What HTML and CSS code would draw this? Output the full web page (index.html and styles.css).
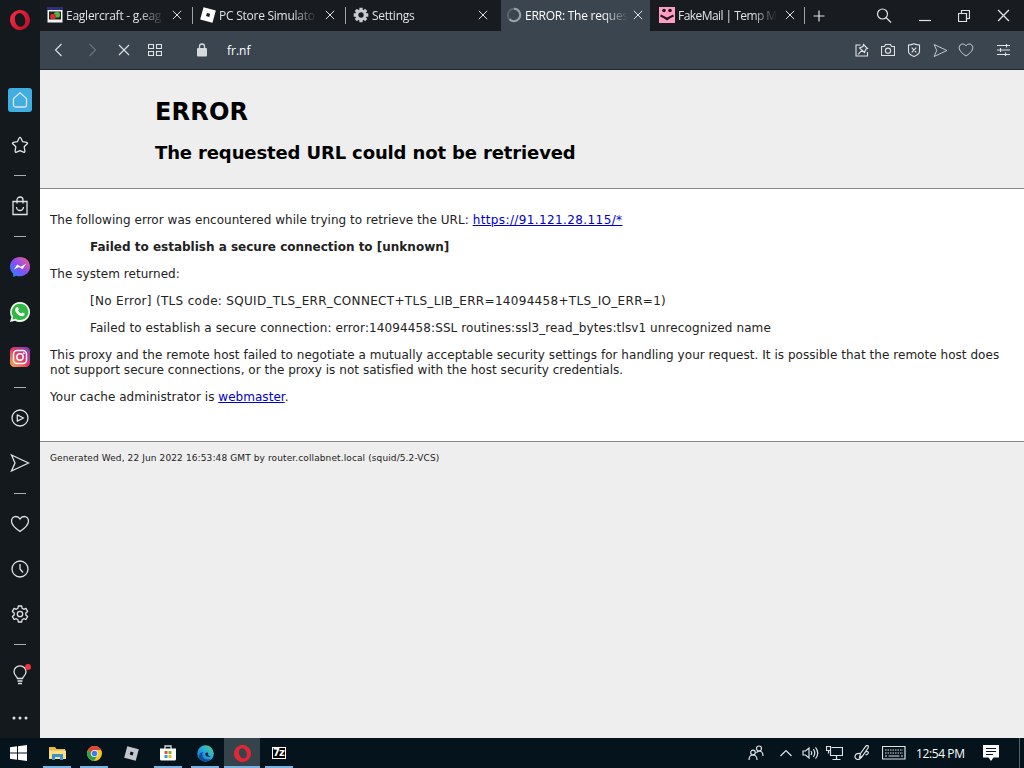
FILE: index.html
```
<!DOCTYPE html>
<html lang="en">
<head>
    <meta charset="utf-8"/>
    <title>ERROR: The requested URL could not be retrieved</title>
    <link rel="stylesheet" href="styles.css">
</head>
<body>
<svg class="defs" width="0" height="0">
    <defs>
        <linearGradient id="opera" x1="0" y1="0" x2="1" y2="1"><stop offset="0" stop-color="#ff2b44"/><stop offset="1" stop-color="#b80d28"/></linearGradient>
        <linearGradient id="messenger" x1="0" y1="1" x2="1" y2="0"><stop offset="0" stop-color="#168bff"/><stop offset=".5" stop-color="#8a4df5"/><stop offset="1" stop-color="#ff6179"/></linearGradient>
        <linearGradient id="insta" x1="0" y1="1" x2="1" y2="0"><stop offset="0" stop-color="#fdb44b"/><stop offset=".5" stop-color="#e23a68"/><stop offset="1" stop-color="#7a3cc8"/></linearGradient>
        <linearGradient id="edge" x1="0" y1="1" x2="1" y2="0"><stop offset="0" stop-color="#1268c4"/><stop offset=".55" stop-color="#27a9e0"/><stop offset="1" stop-color="#5fd668"/></linearGradient>
        <symbol id="x" viewBox="0 0 12 12"><path d="M1 1l10 10M11 1L1 11"/></symbol>
        <symbol id="send" viewBox="0 0 20 20"><path d="M1.500 2L18.500 10 1.500 18 5 10z"/></symbol>
        <symbol id="heart" viewBox="0 0 20 20"><path d="M10 17.500C7 15.500 1.500 11.500 1.500 7c0-2.500 2-4.500 4.300-4.500C7.700 2.500 9.200 3.500 10 5c.8-1.500 2.300-2.500 4.200-2.500 2.300 0 4.300 2 4.300 4.500 0 4.500-5.500 8.500-8.500 10.500z"/></symbol>
    </defs>
</svg>
<div class="desktop">
    <div class="browser">
        <div class="sidebar">
            <div class="logo"><svg width="20" height="20" viewBox="0 0 20 20"><path fill="url(#opera)" fill-rule="evenodd" transform="rotate(-12 10 10)" d="M10 0a10 10 0 1 0 0 20 10 10 0 0 0 0-20zm0 3.200c3.200 0 5.200 3 5.200 6.800s-2 6.800-5.200 6.800S5 13.800 5 10s1.800-6.800 5-6.800z"/></svg></div>
            <div class="item"><span class="home"><svg class="line" width="18" height="18" viewBox="0 0 18 18"><path d="M2.500 7.500L9 1.800l6.500 5.700V14a2 2 0 0 1-2 2h-9a2 2 0 0 1-2-2z"/></svg></span></div>
            <div class="item"><svg class="line" width="18" height="18" viewBox="0 0 18 18"><path stroke-linejoin="round" d="M9 1.300q.6 0 .9.700l1.700 3.700 4 .6q1.500.4.600 1.500l-3 3 .7 4.300q0 1.600-1.400 1L9 14.600 5.500 16.100q-1.400.6-1.400-1l.7-4.300-3-3q-.9-1.100.6-1.500l4-.6L8.100 2q.3-.7.900-.7z"/></svg></div>
            <div class="sep"></div>
            <div class="item"><svg class="line" width="18" height="20" viewBox="0 0 18 20"><path d="M2 5.500h14v13H2zM6 7.500V4a3 3 0 0 1 6 0v3.500M5.500 11a3.500 3.500 0 0 0 7 0"/></svg></div>
            <div class="sep"></div>
            <div class="item"><svg width="20" height="20" viewBox="0 0 20 20"><path fill="url(#messenger)" d="M10 0C4.400 0 0 4.100 0 9.600c0 3 1.200 5.500 3.200 7.200V20l3-1.300c1.200.4 2.500.6 3.800.6 5.600 0 10-4.100 10-9.700S15.600 0 10 0z"/><path fill="#fff" d="M4 12.500l3.200-5 3.500 2.300L16 6.800l-3.500 5.400L9 9.900z"/></svg></div>
            <div class="item"><svg width="20" height="20" viewBox="0 0 20 20"><path fill="#f2f7f2" d="M10 0a10 10 0 0 0-8.600 15L0 20l5.100-1.300A10 10 0 1 0 10 0z"/><path fill="#2fb944" d="M10 1.700a8.200 8.200 0 0 0-6.900 12.700L2.400 17.500l3.200-.8A8.200 8.200 0 1 0 10 1.700z"/><path fill="#fff" d="M6.800 5.200c.6-.3 1.100-.2 1.300.3l.7 1.600c.1.600-.7 1-.7 1.500.7 1.400 1.700 2.300 3.100 2.900.5 0 .9-1.100 1.400-1l1.900 1c.4.400-.1 1.800-.8 2.300-3.400 1.700-9.200-3.200-8.500-6.800.3-.8.900-1.500 1.600-1.800z"/></svg></div>
            <div class="item"><svg width="20" height="20" viewBox="0 0 20 20"><rect width="20" height="20" rx="4.500" fill="url(#insta)"/><g fill="none" stroke="#fff" stroke-width="1.500"><rect x="3.500" y="3.500" width="13" height="13" rx="3.500"/><circle cx="10" cy="10" r="3.200"/></g><circle cx="13.800" cy="6.200" r=".9" fill="#fff"/></svg></div>
            <div class="sep"></div>
            <div class="item"><svg class="line" width="18" height="18" viewBox="0 0 18 18"><circle cx="9" cy="9" r="8"/><path stroke-linejoin="round" d="M6.300 5.800L12.500 9l-6.200 3.200z"/></svg></div>
            <div class="item"><svg class="line" width="20" height="20"><use href="#send"/></svg></div>
            <div class="sep"></div>
            <div class="item"><svg class="line" width="20" height="20"><use href="#heart"/></svg></div>
            <div class="item"><svg class="line" width="18" height="18" viewBox="0 0 18 18"><circle cx="9" cy="9" r="8"/><path d="M9 4v5l3 3.500"/></svg></div>
            <div class="item"><svg class="line" width="18" height="18" viewBox="0 0 18 18"><circle cx="9" cy="9" r="2.700"/><path stroke-linejoin="round" d="M7.300 1h3.400l.4 2.300 1.600 1 2.200-.9 1.700 3L14.800 8v2l1.800 1.500-1.700 3-2.200-.8-1.600 1-.4 2.300H7.300l-.4-2.300-1.600-1-2.200.8-1.700-3L3.200 10V8L1.400 6.400l1.700-3 2.200.9 1.600-1z"/></svg></div>
            <div class="sep"></div>
            <div class="item tips"><svg class="line" width="16" height="20" viewBox="0 0 16 20"><path d="M5.500 13.500c0-1.500-3.500-3-3.500-6.700a6 6 0 0 1 12 0c0 3.700-3.500 5.200-3.500 6.700zM5.500 16h5M6 18.500h4"/></svg><span class="dot"></span></div>
            <div class="item more"><svg width="16" height="4" viewBox="0 0 16 4"><path fill="#dde3e6" d="M.5 2a1.500 1.500 0 1 0 3 0 1.500 1.500 0 1 0-3 0M6.500 2a1.500 1.500 0 1 0 3 0 1.500 1.500 0 1 0-3 0M12.500 2a1.500 1.500 0 1 0 3 0 1.500 1.500 0 1 0-3 0"/></svg></div>
        </div>
        <div class="main">
            <div class="tabs">
                <div class="tab">
                    <svg width="16" height="16" viewBox="0 0 16 16"><rect x=".5" y=".5" width="15" height="15" fill="#f4f4f4"/><path fill="#303078" d="M0 0h16v3H0z"/><path fill="#1e2420" d="M2 4.500h12v8H2z"/><rect x="7" y="5" width="6" height="5.500" rx="2" fill="#52b43e"/><rect x="3" y="7" width="6" height="5" rx="2" fill="#d23030"/></svg>
                    <span class="label">Eaglercraft - g.eag</span>
                    <svg class="close" width="10" height="10"><use href="#x"/></svg>
                </div>
                <div class="tab">
                    <svg width="16" height="16" viewBox="0 0 16 16"><path fill="#fff" fill-rule="evenodd" d="M3.500.2L15.800 3.400l-3.300 12.400L.2 12.500zM7 5.900L6 9.100l3.200.9 1-3.200z"/></svg>
                    <span class="label">PC Store Simulato</span>
                    <svg class="close" width="10" height="10"><use href="#x"/></svg>
                </div>
                <div class="tab settings">
                    <svg width="16" height="16" viewBox="0 0 16 16"><circle cx="8" cy="8" r="4.200" fill="none" stroke="#c7cbce" stroke-width="3"/><path stroke="#c7cbce" stroke-width="3.300" d="M8 .7v2.800M8 12.500v2.800M.7 8h2.800M12.500 8h2.800M2.800 2.800l2 2M11.200 11.200l2 2M13.200 2.800l-2 2M4.800 11.200l-2 2"/></svg>
                    <span class="label">Settings</span>
                    <svg class="close" width="10" height="10"><use href="#x"/></svg>
                </div>
                <div class="tab active">
                    <svg width="16" height="16" viewBox="0 0 16 16" fill="none" stroke-width="2"><circle cx="8" cy="8" r="6.200" stroke="#59646e"/><path stroke="#98a2a9" d="M8 1.800a6.200 6.200 0 1 1-4.500 10.500"/></svg>
                    <span class="label">ERROR: The reques</span>
                    <svg class="close" width="10" height="10"><use href="#x"/></svg>
                </div>
                <div class="tab mail">
                    <svg width="16" height="16" viewBox="0 0 16 16"><path fill="#ff9dc4" d="M0 0h16v16H0z"/><circle cx="5" cy="3.500" r="1.800" fill="#241520"/><circle cx="11" cy="3.500" r="1.800" fill="#241520"/><path d="M1.500 8.500Q5 10 8 12q3-2 6.500-3.500" fill="none" stroke="#241520" stroke-width="2.300"/></svg>
                    <span class="label">FakeMail | Temp M</span>
                    <svg class="close" width="10" height="10"><use href="#x"/></svg>
                </div>
                <svg class="line add" width="12" height="12" viewBox="0 0 12 12"><path d="M6 .5v11M.5 6h11"/></svg>
                <div class="window">
                    <svg class="line" width="16" height="16" viewBox="0 0 16 16"><circle cx="6.500" cy="6" r="5"/><path d="M10 9.500l5 5"/></svg>
                    <svg class="line" width="12" height="12" viewBox="0 0 12 12"><path d="M0 10.500h12"/></svg>
                    <svg class="line" width="12" height="12" viewBox="0 0 12 12"><path d="M.5 3.500h8v8h-8zM3.500 3V.5h8v8H9"/></svg>
                    <svg class="line" width="13" height="13"><use href="#x"/></svg>
                </div>
            </div>
            <div class="toolbar">
                <svg class="line" width="16" height="16" viewBox="0 0 16 16"><path d="M10.500 2l-6 6 6 6"/></svg>
                <svg class="line disabled" width="16" height="16" viewBox="0 0 16 16"><path d="M5.500 2l6 6-6 6"/></svg>
                <svg class="line stop" width="12" height="12"><use href="#x"/></svg>
                <svg class="line" width="14" height="12" viewBox="0 0 14 12"><path d="M.5.5h5v4h-5zM8.500.5h5v4h-5zM.5 7.500h5v4h-5zM8.500 7.500h5v4h-5z"/></svg>
                <svg class="lock" width="12" height="14" viewBox="0 0 12 14"><rect x="1" y="5" width="10" height="8.500" rx="1" fill="#d5dadf"/><path d="M3.500 6V3.500a2.500 2.500 0 0 1 5 0V6" fill="none" stroke="#d5dadf" stroke-width="1.300"/></svg>
                <span class="url">fr.nf</span>
                <div class="actions">
                    <svg class="line" width="14" height="14" viewBox="0 0 14 14"><path d="M5.500 2H1v11h11.500V9M8.500 1.500l4 4-1.500.5-1.500 3.500L4.500 5 8 3.500zM7 7.300l-4 4"/></svg>
                    <svg class="line" width="14" height="14" viewBox="0 0 14 14"><path d="M.5 3.500h3l1-2h5l1 2h3v9H.5z"/><circle cx="7" cy="7.700" r="2.600"/></svg>
                    <svg class="line" width="14" height="14" viewBox="0 0 14 14"><path d="M7 .8c2 1 3.500 1.200 5.500 1.200v6.500c0 2.500-3 4-5.500 5-2.500-1-5.500-2.500-5.500-5V2C3.500 2 5 1.800 7 .8zM4.700 4.700l4.600 4.600M9.300 4.700L4.700 9.300"/></svg>
                    <svg class="line share" width="15" height="15"><use href="#send"/></svg>
                    <svg class="line" width="16" height="16"><use href="#heart"/></svg>
                    <svg class="line easy" width="13" height="12" viewBox="0 0 13 12"><path d="M0 1.500h13M0 6h13M0 10.500h13M9.500 0v3.500M3.500 4v4M8.500 8.500V12"/></svg>
                </div>
            </div>
            <div class="page">
                <div class="titles">
                    <h1>ERROR</h1>
                    <h2>The requested URL could not be retrieved</h2>
                </div>
                <div class="content">
                    <p>The following error was encountered while trying to retrieve the URL: <a class="target" href="#">https://91.121.28.115/*</a></p>
                    <blockquote><b>Failed to establish a secure connection to [unknown]</b></blockquote>
                    <p>The system returned:</p>
                    <blockquote>
                        <p class="code">[No Error] (TLS code: SQUID_TLS_ERR_CONNECT+TLS_LIB_ERR=14094458+TLS_IO_ERR=1)</p>
                        <p class="detail">Failed to establish a secure connection: error:14094458:SSL routines:ssl3_read_bytes:tlsv1 unrecognized name</p>
                    </blockquote>
                    <p>This proxy and the remote host failed to negotiate a mutually acceptable security settings for handling your request. It is possible that the remote host does<br/>not support secure connections, or the proxy is not satisfied with the host security credentials.</p>
                    <p>Your cache administrator is <a href="#">webmaster</a>.</p>
                </div>
                <div class="footer">Generated Wed, 22 Jun 2022 16:53:48 GMT by router.collabnet.local (squid/5.2-VCS)</div>
            </div>
        </div>
    </div>
    <div class="taskbar">
        <div class="start"><svg width="17" height="16" viewBox="0 0 17 16"><path fill="#fff" d="M0 2.300l7-1v6.200H0zM8 1.200L17 0v7.500H8zM0 8.500h7v6.200l-7-1zM8 8.500h9V16l-9-1.200z"/></svg></div>
        <div class="app open"><svg width="17" height="15" viewBox="0 0 17 15"><path fill="#e9b847" d="M0 1h6l1.500 2H16v10H0z"/><path fill="#fbdf82" d="M0 4.500h17V13H0z"/><path fill="#3f90cf" d="M3 8h11v6h-3v-3H6v3H3z"/></svg></div>
        <div class="app open"><svg width="15" height="15" viewBox="0 0 16 16"><circle cx="8" cy="8" r="8" fill="#f9c61f"/><path fill="#de4437" d="M1.100 4A8 8 0 0 1 15 4.200H8L5 9.500z"/><path fill="#2da24c" d="M1.100 4A8 8 0 0 0 7.500 16l3.600-6.200L8 11.500l-3-2z"/><circle cx="8" cy="8" r="3.800" fill="#fff"/><circle cx="8" cy="8" r="3" fill="#3d7de8"/></svg></div>
        <div class="app"><svg width="15" height="15" viewBox="0 0 16 16"><path fill="#c3c7cb" fill-rule="evenodd" d="M3.500.2L15.800 3.400l-3.300 12.400L.2 12.500zM7 5.900L6 9.100l3.200.9 1-3.200z"/></svg></div>
        <div class="app open"><svg width="16" height="16" viewBox="0 0 16 16"><path d="M5 4V1h6v3" fill="none" stroke="#d9dcdf" stroke-width="1.300"/><path fill="#fff" d="M0 3.500h16V14q0 1.500-1.500 1.500h-13Q0 15.500 0 14z"/><path fill="#e5522b" d="M4.500 6h3v3h-3z"/><path fill="#7db928" d="M8.500 6h3v3h-3z"/><path fill="#2b9fe0" d="M4.500 10h3v3h-3z"/><path fill="#f5b620" d="M8.500 10h3v3h-3z"/></svg></div>
        <div class="app open"><svg width="17" height="17" viewBox="0 0 17 17"><circle cx="8.500" cy="8.500" r="8.300" fill="url(#edge)"/><path fill="#0f4f9e" d="M5.500 8.500c-1 4.500 3 7.500 8.500 5.300-3.500 4.500-12 3.200-12-2.600C2 9 3.500 7.200 6.500 7z"/><path fill="#062330" d="M8.500 8.300c1-1.300 3-.8 2.700.8-.6 1.500.5 2.400 3 2.200-3.200 1.500-6.700-.3-5.700-3z"/></svg></div>
        <div class="app current"><svg width="17" height="17" viewBox="0 0 20 20"><path fill="#e32636" fill-rule="evenodd" transform="rotate(-20 10 10)" d="M10 0a10 10 0 1 0 0 20 10 10 0 0 0 0-20zm.5 4c2.800 0 4.500 2.700 4.500 6s-1.700 6-4.500 6S6 13.300 6 10s1.700-6 4.500-6z"/></svg></div>
        <div class="app open"><span class="sevenzip">7z</span></div>
        <div class="tray">
            <svg class="line" width="16" height="16" viewBox="0 0 16 16"><circle cx="5" cy="7.500" r="2.300"/><path d="M1 15c0-3 1.500-5 4-5s4 2 4 5"/><circle cx="11" cy="3.500" r="2.500"/><path d="M8.500 8c.6-1.300 1.500-2 2.500-2 2.500 0 4 2 4 5"/></svg>
            <svg class="line chevron" width="12" height="8" viewBox="0 0 12 8"><path d="M.5 7L6 1.500 11.500 7"/></svg>
            <svg class="line volume" width="17" height="14" viewBox="0 0 17 14"><path d="M1 5h2.500L7 2v10L3.500 9H1zM9 5q1.500 2 0 4M11.300 3.200q3 3.800 0 7.600M13.500 1.300q4.500 5.700 0 11.400"/></svg>
            <svg class="line network" width="17" height="14" viewBox="0 0 17 14"><path d="M5.500 1.500h11v8h-12V5M.5.5h4v4h-4zM2.500 4.500v3M10.500 9.500v4M6.500 13.500h8"/></svg>
            <svg class="line pen" width="17" height="16" viewBox="0 0 17 16"><path d="M5.500 12.500l1-4L12 1q1.500-1.500 2.300.2Q14.500 2 14 3L8.500 11zM6 8.500c-6-.5-6.500 6-2 6 4 0 6-8 9-8 2.500 0 1 4-1.500 3"/></svg>
            <svg class="line keyboard" width="24" height="14" viewBox="0 0 24 14"><path d="M.5.500h22.500v12.500H.5z"/><path stroke-dasharray="1.500 1" d="M3 4h18M3 7h18"/><path d="M3 10h2M6.500 10h11M19 10h2"/></svg>
            <span class="clock">12:54 PM</span>
            <svg class="notify" width="16" height="16" viewBox="0 0 16 16"><path fill="#fff" d="M0 0h16v12.500h-5.500L8 16l-2.500-3.500H0z"/><path stroke="#07141f" d="M3 3.500h10M3 6.500h10M3 9.500h7"/></svg>
            <span class="peek"></span>
        </div>
    </div>
</div>
</body>
</html>
```

FILE: styles.css
```
body {
    margin: 0;
    overflow: hidden;
    font-family: "Open Sans", "Noto Sans", sans-serif;
    font-size: 12px;
    color: #dfe3e6;
}

.defs {
    position: absolute;
}

.desktop {
    display: flex;
    flex-direction: column;
    width: 1024px;
    height: 768px;
}

.browser {
    display: flex;
    height: 738px;
}

svg {
    display: block;
    flex: none;
}

.line, .close {
    fill: none;
    stroke: #dfe3e6;
    stroke-width: 1.2;
}

/* sidebar */
.sidebar {
    width: 40px;
    background: #14191d;
}

.sidebar .logo {
    display: flex;
    justify-content: center;
    height: 68px;
    padding-top: 10px;
}

.sidebar .item {
    display: flex;
    align-items: center;
    justify-content: center;
    box-sizing: border-box;
    height: 45px;
    padding-bottom: 1px;
}

.sidebar .item.more {
    height: 40px;
    padding: 0;
}

.sidebar .line {
    stroke-width: 1.3;
}

.sidebar .home {
    display: flex;
    align-items: center;
    justify-content: center;
    width: 24px;
    height: 24px;
    border-radius: 3px;
    background: #40aee0;
}

.sidebar .sep {
    width: 12px;
    height: 1px;
    margin: 7px auto 8px;
    background: #a9afb3;
}

.sidebar .tips {
    position: relative;
}

.sidebar .tips .dot {
    position: absolute;
    top: 11px;
    right: 9px;
    width: 6px;
    height: 6px;
    border-radius: 50%;
    background: #f2363c;
}

.main {
    display: flex;
    flex-direction: column;
    width: 984px;
}

/* tab strip */
.tabs {
    display: flex;
    align-items: center;
    height: 31px;
    background: #181c21;
}

.tab {
    display: flex;
    align-items: center;
    box-sizing: border-box;
    width: 153px;
    height: 31px;
    padding: 0 11px 1px 7px;
    background: linear-gradient(#9ea3a7, #9ea3a7) right center / 1px 17px no-repeat;
}

.tab.settings {
    width: 155px;
    padding-right: 13px;
    background: none;
}

.tab.active {
    width: 149px;
    padding: 0 9px 1px 5px;
    background: #3b4550;
    color: #fff;
}

.tab.mail {
    width: 155px;
    padding-left: 9px;
}

.tab .label {
    flex: 1;
    margin: 1px 8px 0 3px;
    white-space: nowrap;
    letter-spacing: -0.25px;
    -webkit-mask-image: linear-gradient(to right, #000 75%, transparent);
    mask-image: linear-gradient(to right, #000 75%, transparent);
}

.tab.active .label {
    margin-right: 5px;
}

.tab.mail .label {
    letter-spacing: -0.55px;
}

.tabs .add {
    margin-left: 8px;
}

.tabs .window {
    display: flex;
    align-items: center;
    justify-content: space-between;
    width: 134px;
    margin: 0 14px 0 auto;
}

.tabs .window .line:nth-child(2) {
    margin-top: 1px;
}

/* address bar */
.toolbar {
    display: flex;
    align-items: center;
    height: 38px;
    padding: 0 14px 0 11px;
    border-bottom: 1px solid #232b32;
    background: #3b4550;
}

.toolbar .line {
    margin-right: 17px;
    stroke-width: 1.1;
}

.toolbar .disabled {
    stroke: #69747d;
    margin-right: 18px;
}

.toolbar .stop {
    margin-right: 18px;
}

.toolbar .lock {
    margin: 0 19px 0 17px;
}

.toolbar .url {
    color: #fff;
}

.toolbar .actions {
    display: flex;
    align-items: center;
    margin-left: auto;
}

.toolbar .actions .line {
    margin-right: 12px;
}

.toolbar .actions .share {
    margin-right: 10px;
}

.toolbar .actions .line.easy {
    margin: 0 0 0 11px;
}

/* proxy error page */
.page {
    flex: 1;
    background: #eee;
    font-family: Verdana, "DejaVu Sans", sans-serif;
    color: #222;
}

.page .titles {
    height: 118px;
    padding-left: 115px;
    border-bottom: 1px solid #888;
    color: #000;
}

.page h1, .page h2 {
    margin: 0;
}

.page h1 {
    padding-top: 27px;
    font-size: 24px;
    line-height: 30px;
    letter-spacing: 0.2px;
}

.page h2 {
    padding-top: 15px;
    font-size: 18px;
    line-height: 22px;
    letter-spacing: -0.13px;
}

.page .content {
    box-sizing: border-box;
    height: 253px;
    padding: 24px 10px 0;
    border-bottom: 1px solid #888;
    background: #fff;
    line-height: 15px;
    letter-spacing: 0.04px;
    white-space: nowrap;
}

.page b {
    letter-spacing: 0;
}

.page p {
    margin: 0 0 12px;
}

.page .target {
    letter-spacing: 0.39px;
}

.page .code {
    letter-spacing: 0.31px;
}

.page .detail {
    letter-spacing: 0.11px;
}

.page blockquote {
    margin: 0 40px 12px;
}

.page a {
    color: #0000c8;
}

.page .footer {
    padding: 9px 10px;
    font-size: 9px;
    line-height: 15px;
    letter-spacing: 0.11px;
}

/* taskbar */
.taskbar {
    display: flex;
    height: 30px;
    background: #04131c;
}

.taskbar .start {
    display: flex;
    align-items: center;
    justify-content: center;
    width: 36px;
    margin-right: 3px;
}

.taskbar .app {
    display: flex;
    align-items: center;
    justify-content: center;
    width: 36px;
    margin-right: 1px;
}

.taskbar .open {
    background: linear-gradient(#76b3e3, #76b3e3) center bottom / 28px 2px no-repeat;
}

.taskbar .current {
    background: linear-gradient(#76b3e3, #76b3e3) center bottom / 36px 2px no-repeat #35434a;
}

.taskbar .sevenzip {
    width: 12px;
    border: 1px solid #fff;
    background: #000;
    color: #fff;
    font: bold 10px/10px "DejaVu Sans", sans-serif;
    letter-spacing: -1px;
}

.taskbar .tray {
    display: flex;
    align-items: center;
    margin-left: auto;
    color: #fff;
}

.taskbar .chevron {
    margin-left: 16px;
}

.taskbar .volume {
    margin-left: 10px;
}

.taskbar .network {
    margin-left: 7px;
}

.taskbar .pen {
    margin-left: 11px;
}

.taskbar .keyboard {
    margin-left: 11px;
}

.taskbar .clock {
    width: 49px;
    margin-left: 10px;
    white-space: nowrap;
    letter-spacing: -0.4px;
}

.taskbar .notify {
    margin-left: 18px;
}

.taskbar .peek {
    width: 4px;
    height: 30px;
    margin-left: 20px;
    border-left: 1px solid #59636a;
}
```
